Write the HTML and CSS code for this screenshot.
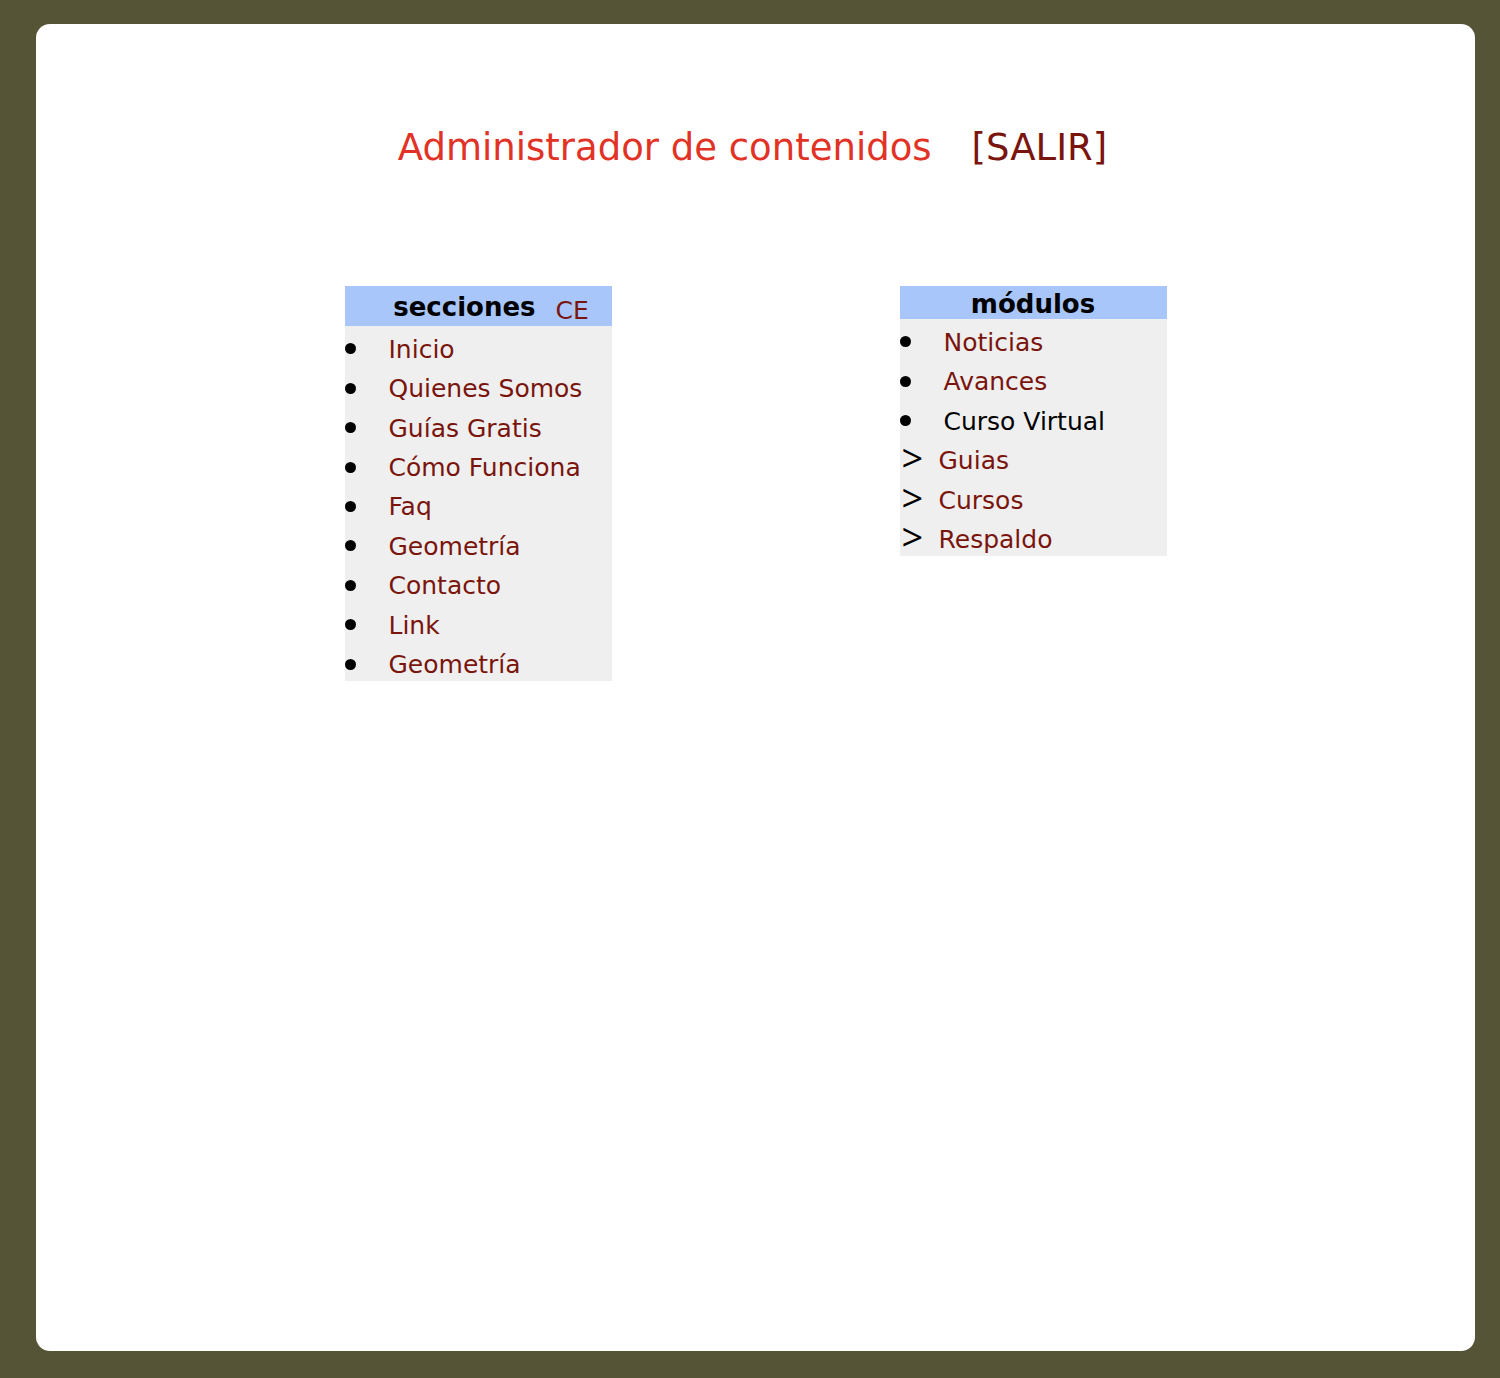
FILE: index.html
```html
<!DOCTYPE html>
<html lang="es">
<head>
<meta charset="utf-8">
<title>Administrador de contenidos</title>
<link rel="stylesheet" href="styles.css">
</head>
<body>
<main class="sheet">
  <header class="heading">
    <h1 class="title">Administrador de contenidos</h1>
    <a class="logout" href="#salir">[SALIR]</a>
  </header>
  <div class="panels">
    <section class="panel">
      <div class="panel-head panel-head-tall">
        <h2 class="panel-title">secciones</h2>
        <a class="panel-link" href="#ce">CE</a>
      </div>
      <ul class="list">
        <li class="item"><a href="#inicio">Inicio</a></li>
        <li class="item"><a href="#quienes">Quienes Somos</a></li>
        <li class="item"><a href="#guias-gratis">Guías Gratis</a></li>
        <li class="item"><a href="#como">Cómo Funciona</a></li>
        <li class="item"><a href="#faq">Faq</a></li>
        <li class="item"><a href="#geometria">Geometría</a></li>
        <li class="item"><a href="#contacto">Contacto</a></li>
        <li class="item"><a href="#link">Link</a></li>
        <li class="item"><a href="#geometria-2">Geometría</a></li>
      </ul>
    </section>
    <section class="panel panel-short">
      <div class="panel-head">
        <h2 class="panel-title">módulos</h2>
      </div>
      <ul class="list">
        <li class="item"><a href="#noticias">Noticias</a></li>
        <li class="item"><a href="#avances">Avances</a></li>
        <li class="item">Curso Virtual</li>
        <li class="item subitem"><a href="#guias">Guias</a></li>
        <li class="item subitem"><a href="#cursos">Cursos</a></li>
        <li class="item subitem"><a href="#respaldo">Respaldo</a></li>
      </ul>
    </section>
  </div>
</main>
</body>
</html>
```

FILE: styles.css
```css
* {
  box-sizing: border-box;
}

body {
  display: flex;
  min-height: 100vh;
  margin: 0;
  padding: 24px 25px 27px 36px;
  background: #555436;
  color: #000;
  font-family: Verdana, "DejaVu Sans", sans-serif;
  font-size: 25px;
}

a {
  color: #7a150d;
  text-decoration: none;
}

.sheet {
  flex: 1;
  padding-top: 100px;
  border-radius: 14px;
  background: #fff;
}

.heading {
  display: flex;
  justify-content: center;
  gap: 40px;
  padding-right: 6px;
  font-size: 37px;
  line-height: 48px;
}

.title {
  margin: 0;
  color: #e23226;
  font-size: 37px;
  font-weight: 400;
}

.panels {
  display: flex;
  justify-content: center;
  align-items: flex-start;
  gap: 288px;
  margin-top: 114px;
}

.panel {
  display: flex;
  flex-direction: column;
  width: 267px;
  min-height: 395px;
  background: #efefef;
}

.panel-short {
  min-height: 270px;
}

.panel-head {
  display: flex;
  justify-content: center;
  gap: 20px;
  height: 33px;
  background: #a8c6fa;
  line-height: 36px;
}

.panel-head-tall {
  height: 40px;
  padding-left: 26px;
  line-height: 42px;
}

.panel-title {
  margin: 0;
  font-size: 26px;
}

.panel-link {
  padding-top: 4px;
}

.list {
  display: grid;
  flex: 1;
  grid-auto-rows: 1fr;
  margin: 0;
  padding: 0;
  list-style: none;
}

.item {
  display: flex;
  align-items: center;
  padding-top: 8px;
  line-height: 30px;
}

.item::before {
  flex: none;
  width: 11px;
  height: 11px;
  margin: 0 33px 2px 0;
  border-radius: 50%;
  background: #000;
  content: "";
}

.subitem::before {
  width: 37px;
  height: auto;
  margin: 0 0 8px;
  padding-left: 2px;
  border-radius: 0;
  background: none;
  font-family: "Open Sans", sans-serif;
  font-size: 38px;
  line-height: 22px;
  content: ">";
}
```
